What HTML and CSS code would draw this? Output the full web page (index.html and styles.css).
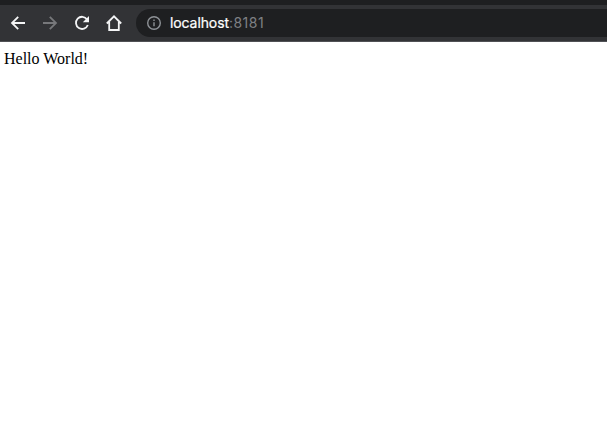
FILE: index.html
```html
<!DOCTYPE html>
<html lang="en">
<head>
<meta charset="utf-8">
<title>localhost:8181</title>
<link rel="stylesheet" href="styles.css">
</head>
<body>
<div class="tabstrip"></div>
<header class="toolbar">
  <nav class="controls">
    <svg class="icon" viewBox="0 0 16 16"><path d="M15 8H2.7M8.2 1.8L2 8l6.2 6.2"/></svg>
    <svg class="icon disabled" viewBox="0 0 16 16"><path d="M1 8h12.3M7.8 1.8L14 8l-6.2 6.2"/></svg>
    <svg class="icon" viewBox="0 0 16 16"><path d="M13.1 4.4A6.1 6.1 0 1 0 13.8 10"/><path class="solid" d="M15 1v6.2H8.8z"/></svg>
    <svg class="icon home" viewBox="0 0 18 18"><path d="M1.8 9.5L9 2.3l7.2 7.2M4.2 8v8h9.6V8"/></svg>
  </nav>
  <div class="address">
    <svg class="info" viewBox="0 0 16 16"><circle cx="8" cy="8" r="6.3"/><path d="M8 7.2v4.1M8 4.5v1.6"/></svg>
    <span class="host">localhost</span><span class="port">:8181</span>
  </div>
</header>
<main class="page">Hello World!</main>
</body>
</html>
```
FILE: styles.css
```css
body {
  margin: 0;
  background: #fff;
}
.tabstrip {
  height: 5px;
  background: #1e1f21;
}
.toolbar {
  box-sizing: border-box;
  height: 37px;
  display: flex;
  align-items: flex-start;
  padding: 4px 0 0 10px;
  background: #323336;
  border-bottom: 1px solid #505155;
}
.controls {
  display: flex;
  align-items: center;
  gap: 16px;
  height: 28px;
  width: 126px;
}
.icon {
  flex: none;
  width: 16px;
  height: 16px;
  fill: none;
  stroke: #f4f5f6;
  stroke-width: 1.8;
}
.icon.home {
  width: 18px;
  height: 18px;
  margin-left: -1px;
}
.icon.disabled {
  stroke: #77787b;
}
.icon .solid {
  fill: #f4f5f6;
  stroke: none;
}
.address {
  box-sizing: border-box;
  flex: 1;
  height: 28px;
  display: flex;
  align-items: center;
  padding-left: 10px;
  border-radius: 14px 0 0 14px;
  background: #1e1f21;
  font: 14px/28px Inter, sans-serif;
}
.info {
  width: 16px;
  height: 16px;
  margin-right: 8px;
  fill: none;
  stroke: #8e9297;
  stroke-width: 1.4;
}
.host {
  color: #fff;
  letter-spacing: -0.1px;
  -webkit-text-stroke: 0.2px #fff;
}
.port {
  color: #7e8084;
  letter-spacing: 0.5px;
}
.page {
  padding: 8px 4px;
  font: 16px/18px "Liberation Serif", serif;
  color: #000;
}
```
